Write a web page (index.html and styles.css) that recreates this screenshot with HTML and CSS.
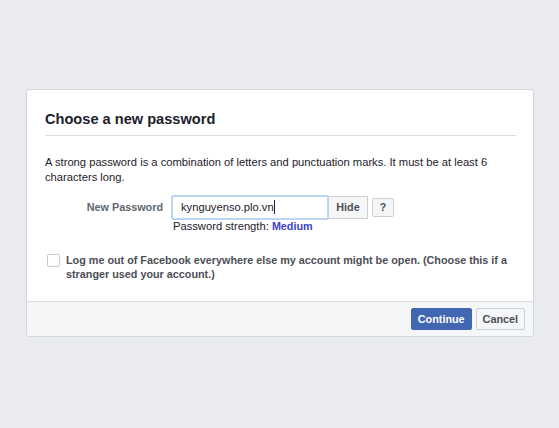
FILE: index.html
```html
<!DOCTYPE html>
<html>
<head>
<meta charset="utf-8">
<link rel="stylesheet" href="styles.css">
</head>
<body>
<div class="card">
  <div class="body">
    <h2 class="title">Choose a new password</h2>
    <p class="intro">A strong password is a combination of letters and punctuation marks. It must be at least 6 characters long.</p>
    <div class="form-row">
      <div class="label">New Password</div>
      <div class="field">
        <div class="input-group">
          <div class="input">kynguyenso.plo.vn<span class="caret"></span></div>
          <div class="btn-hide">Hide</div>
          <div class="btn-help">?</div>
        </div>
        <div class="strength">Password strength: <span class="medium">Medium</span></div>
      </div>
    </div>
    <div class="check-row">
      <span class="checkbox"></span>
      <span class="check-label">Log me out of Facebook everywhere else my account might be open. (Choose this if a stranger used your account.)</span>
    </div>
  </div>
  <div class="footer">
    <span class="btn btn-primary">Continue</span>
    <span class="btn btn-default">Cancel</span>
  </div>
</div>
</body>
</html>
```

FILE: styles.css
```css
html, body {
  margin: 0;
  padding: 0;
  background: #e9ebee;
  font-family: "Liberation Sans", Arial, sans-serif;
  font-size: 11.2px;
  color: #1d2129;
}
body {
  padding: 89px 25px 0 26px;
}
.card {
  width: 506px;
  background: #fff;
  border: 1px solid #d3d6db;
  border-radius: 3px;
  overflow: hidden;
}
.body {
  padding: 19px 17px 0 18px;
}
.title {
  margin: 0;
  font-size: 14.6px;
  font-weight: bold;
  line-height: 20px;
  color: #1d2129;
  padding-bottom: 6px;
  border-bottom: 1px solid #dadde1;
}
.intro {
  margin: 19px 0 0 0;
  line-height: 15px;
  padding-right: 8px;
}
.form-row {
  display: flex;
  margin-top: 10px;
}
.label {
  width: 118px;
  text-align: right;
  color: #606770;
  font-weight: bold;
  font-size: 10.8px;
  line-height: 25px;
  padding-right: 8px;
}
.field {
  display: flex;
  flex-direction: column;
}
.input-group {
  display: flex;
  align-items: center;
}
.input {
  box-sizing: border-box;
  width: 158px;
  height: 25px;
  border: 2px solid #bcd4f5;
  border-radius: 2px;
  padding: 0 8px;
  line-height: 21px;
  color: #1d2129;
}
.caret {
  display: inline-block;
  width: 1px;
  height: 14px;
  background: #1d2129;
  vertical-align: -3px;
}
.btn-hide {
  box-sizing: border-box;
  height: 23px;
  width: 39px;
  text-align: center;
  border: 1px solid #ccd0d5;
  border-left: none;
  background: #f5f6f7;
  color: #4b4f56;
  font-weight: bold;
  font-size: 10.8px;
  line-height: 21px;
}
.btn-help {
  box-sizing: border-box;
  margin-left: 4px;
  height: 19px;
  width: 22px;
  text-align: center;
  border: 1px solid #ccd0d5;
  border-radius: 2px;
  background: #f5f6f7;
  color: #4b4f56;
  font-weight: bold;
  font-size: 10.5px;
  line-height: 17px;
}
.strength {
  padding-left: 2px;
  line-height: 12px;
  color: #1d2129;
}
.medium {
  color: #3b45c8;
  font-weight: bold;
  font-size: 10.8px;
}
.check-row {
  display: flex;
  align-items: flex-start;
  margin-top: 21px;
  padding-left: 2px;
  padding-bottom: 20px;
}
.checkbox {
  flex: none;
  box-sizing: border-box;
  width: 13px;
  height: 13px;
  border: 1px solid #c8ccd1;
  border-radius: 2px;
  background: #fff;
  margin-top: 1px;
  margin-right: 6px;
}
.check-label {
  color: #4b4f56;
  font-weight: bold;
  font-size: 10.8px;
  line-height: 14px;
  padding-right: 8px;
}
.footer {
  background: #f5f6f7;
  border-top: 1px solid #dadde1;
  padding: 6px 8px 6px 0;
  display: flex;
  justify-content: flex-end;
  gap: 4px;
}
.btn {
  box-sizing: border-box;
  height: 22px;
  line-height: 20px;
  padding: 0 6px;
  border-radius: 2px;
  font-weight: bold;
  font-size: 10.8px;
}
.btn-primary {
  background: #4267b2;
  border: 1px solid #4267b2;
  color: #fff;
}
.btn-default {
  background: #f5f6f7;
  border: 1px solid #ccd0d5;
  color: #4b4f56;
}
```
